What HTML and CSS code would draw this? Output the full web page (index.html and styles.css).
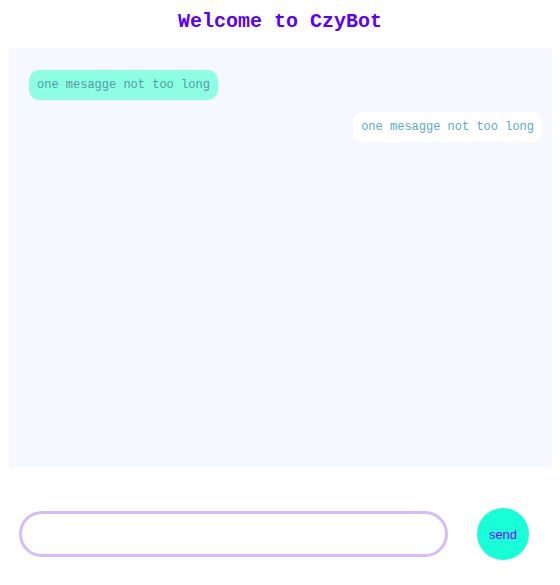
FILE: index.html
```html
<!DOCTYPE html>
<html>
<head>
<meta charset="utf-8">
<link rel="stylesheet" href="styles.css">
</head>
<body>
<div class="app">
  <header class="header"><h1 class="title">Welcome to CzyBot</h1></header>
  <main class="chat">
    <div class="msg msg-bot">one mesagge not too long</div>
    <div class="msg msg-user">one mesagge not too long</div>
  </main>
  <footer class="composer">
    <input class="input" type="text">
    <button class="send">send</button>
  </footer>
</div>
</body>
</html>
```
FILE: styles.css
```css
html, body {
  margin: 0;
  padding: 0;
  background: #ffffff;
}
.app {
  width: 560px;
  display: flex;
  flex-direction: column;
}
.header {
  height: 48px;
  display: flex;
  align-items: center;
  justify-content: center;
}
.title {
  margin: 0;
  font-family: "Liberation Mono", monospace;
  font-weight: bold;
  font-size: 20px;
  line-height: 24px;
  color: #5a00ff;
  padding-bottom: 4px;
}
.chat {
  margin-left: 9px;
  width: 543px;
  height: 420px;
  box-sizing: border-box;
  background: #f5f9ff;
  padding: 22px 10px 0 20px;
  display: flex;
  flex-direction: column;
  align-items: flex-start;
  gap: 12px;
}
.msg {
  font-family: "Liberation Mono", monospace;
  font-size: 12px;
  line-height: 14px;
  padding: 8px;
  border-radius: 10px;
  white-space: nowrap;
}
.msg-bot {
  background: #8effe5;
  color: #4f9c9e;
}
.msg-user {
  align-self: flex-end;
  background: #ffffff;
  color: #56adbe;
}
.composer {
  display: flex;
  align-items: center;
  padding: 40px 0 0 19px;
  gap: 29px;
}
.input {
  width: 429px;
  height: 46px;
  box-sizing: border-box;
  border: 3px solid #d3bcfb;
  border-radius: 23px;
  outline: none;
  margin: 0;
  padding: 0 16px;
  background: #fff;
}
.send {
  width: 52px;
  height: 52px;
  border-radius: 50%;
  border: none;
  padding: 0;
  margin: 0;
  background: #18ffd7;
  color: #8400ff;
  font-family: "Liberation Sans", Arial, sans-serif;
  font-size: 13px;
}
```
